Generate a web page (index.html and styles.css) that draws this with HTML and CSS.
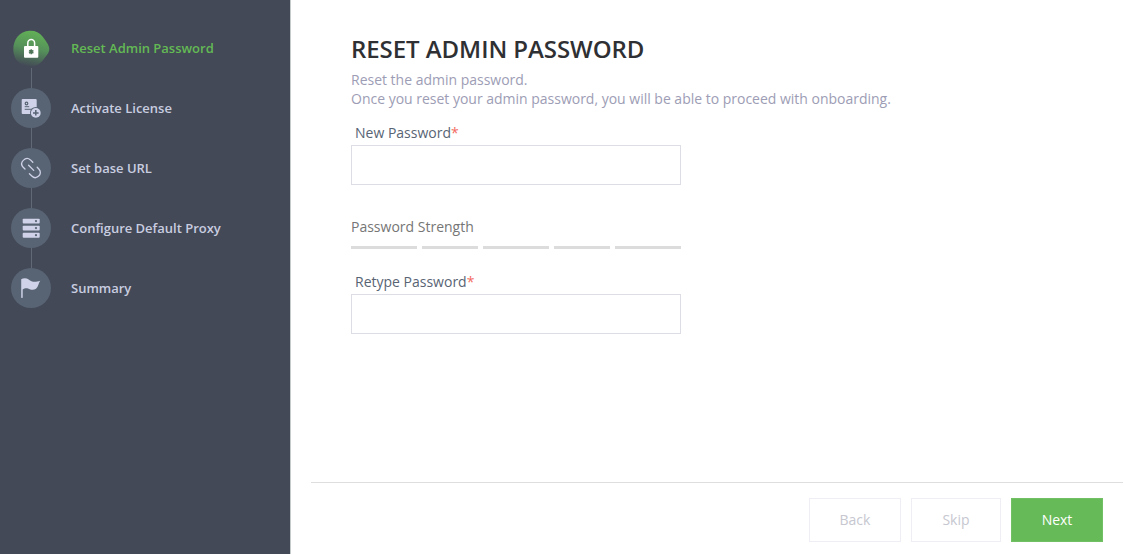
FILE: index.html
```html
<!DOCTYPE html>
<html lang="en">
<head>
<meta charset="utf-8">
<title>Reset Admin Password</title>
<link rel="stylesheet" href="styles.css">
</head>
<body>
<div class="wizard">
  <nav class="sidebar">
    <ol class="steps">
      <li class="step active">
        <svg class="icon" viewBox="0 0 40 40">
          <defs><linearGradient id="glow" x1=".6" y1="0" x2=".4" y2="1"><stop offset="0" stop-color="#62b156"/><stop offset=".5" stop-color="#55905a"/><stop offset="1" stop-color="#434956"/></linearGradient></defs>
          <path fill="url(#glow)" d="M18.500 2.800C24 2.500 28.500 4.500 31.500 8.500C34 12 38.300 16.500 38.300 21C38.300 25 35 28 32.500 31.500C29 36.500 24 38.500 19 38.300C9 38 2.300 31.500 2.300 21.500C2.300 11.500 8.500 3.300 18.500 2.800Z"/>
          <path fill="none" stroke="#fff" stroke-width="1.500" d="M16.800 19v-4a3.400 3.400 0 0 1 6.800 0v4"/>
          <rect x="13" y="18" width="14.300" height="11.800" rx="1" fill="#fff"/>
          <path stroke="#4e7458" stroke-width="1.500" d="M20.200 21.300v5M18 22.500l4.400 2.600M22.400 22.500l-4.400 2.600"/>
        </svg>
        <span>Reset Admin Password</span>
      </li>
      <li class="step">
        <svg class="icon" viewBox="0 0 40 40">
          <circle cx="20" cy="20" r="20" fill="#586474"/>
          <rect x="10.700" y="11" width="15" height="15" rx="1" fill="#cfd2e8"/>
          <circle cx="15.500" cy="15.500" r="1.300" fill="none" stroke="#586474" stroke-width="1.200"/>
          <path stroke="#586474" stroke-width="1" d="M13.700 18.700h4.500M13.700 21.300h7"/>
          <circle cx="24.800" cy="24.700" r="5.800" fill="#586474"/>
          <circle cx="24.800" cy="24.900" r="4.900" fill="#cfd2e8"/>
          <path stroke="#586474" stroke-width="1.500" d="M24.800 22v5.600M22 24.900h5.600"/>
        </svg>
        <span>Activate License</span>
      </li>
      <li class="step">
        <svg class="icon" viewBox="0 0 40 40">
          <circle cx="20" cy="20" r="20" fill="#586474"/>
          <g fill="none" stroke="#cfd2e8" stroke-width="1.300" stroke-linecap="round">
            <path d="M21.800 14.200L19.500 11.900C17.300 10 14.500 10.100 12.500 12.100C10.200 14.300 10.300 17.200 12.200 19.200L14 21"/>
            <path d="M26.200 19.300L28 21.200C29.900 23.200 29.800 26.200 27.700 28.100C25.500 30.100 22.700 29.900 20.800 28L18.400 25.700"/>
            <path d="M17.600 17.300l5.100 5.100"/>
          </g>
        </svg>
        <span>Set base URL</span>
      </li>
      <li class="step">
        <svg class="icon" viewBox="0 0 40 40">
          <circle cx="20" cy="20" r="20" fill="#586474"/>
          <g fill="#cfd2e8"><rect x="11.700" y="10.700" width="17" height="4.800" rx=".9"/><rect x="11.700" y="17.700" width="17" height="4.800" rx=".9"/><rect x="11.700" y="24.800" width="17" height="4.900" rx=".9"/></g>
          <g fill="#586474"><circle cx="25" cy="13.100" r="1.100"/><circle cx="25" cy="20.100" r="1.100"/><circle cx="25" cy="27.200" r="1.100"/></g>
        </svg>
        <span>Configure Default Proxy</span>
      </li>
      <li class="step">
        <svg class="icon" viewBox="0 0 40 40">
          <circle cx="20" cy="20" r="20" fill="#586474"/>
          <path fill="#cfd2e8" d="M10.200 11.200C12.500 9.800 15.500 9.800 17.700 11.500C20.700 13.900 23.500 14.600 29.200 12.800C27.300 15.300 27.500 18.700 25 20.800C22.300 22.700 19.500 21.700 17 20.500C15 19.900 13.200 20.500 11.700 21.600V29.500Q11 30.700 10.200 29.500Z"/>
        </svg>
        <span>Summary</span>
      </li>
    </ol>
  </nav>
  <main class="content">
    <form class="form">
      <h1 class="title">RESET ADMIN PASSWORD</h1>
      <p class="intro">Reset the admin password.<br>Once you reset your admin password, you will be able to proceed with onboarding.</p>
      <label class="label" for="new">New Password<span class="required">*</span></label>
      <input class="input" id="new" type="password">
      <div class="strength">Password Strength</div>
      <div class="meter"><i class="bar"></i><i class="bar short"></i><i class="bar"></i><i class="bar short"></i><i class="bar"></i></div>
      <label class="label" for="retype">Retype Password<span class="required">*</span></label>
      <input class="input" id="retype" type="password">
    </form>
    <footer class="footer">
      <button class="button back">Back</button>
      <button class="button skip">Skip</button>
      <button class="button next">Next</button>
    </footer>
  </main>
</div>
</body>
</html>
```
FILE: styles.css
```css
* { box-sizing: border-box; }
body { margin: 0; font-family: "Open Sans", sans-serif; font-size: 14px; color: #586474; }
.wizard { display: flex; height: 554px; overflow: hidden; background: #fff; }
.sidebar { width: 291px; flex: none; padding: 28px 0 0 11px; background: #434956; border-right: 1px solid #c6caca; }
.steps { list-style: none; margin: 0; padding: 0; display: flex; flex-direction: column; gap: 20px; }
.step { position: relative; display: flex; align-items: center; gap: 20px; height: 40px; font-size: 13px; font-weight: 600; letter-spacing: -0.01px; color: #c9cde0; }
.step + .step::before { content: ""; position: absolute; left: 20px; top: -20px; width: 1px; height: 20px; background: #626976; }
.step.active { color: #63ba55; }
.icon { width: 40px; height: 40px; flex: none; }
.content { flex: 1; display: flex; flex-direction: column; padding: 32px 1px 0 20px; }
.form { flex: 1; display: flex; flex-direction: column; align-items: flex-start; padding-left: 40px; }
.title { margin: 0; font-size: 24px; line-height: 33px; font-weight: 600; letter-spacing: -0.06px; color: #2f3033; }
.intro { margin: 5px 0 0; line-height: 19px; letter-spacing: -0.01px; color: #9d9db5; }
.label { margin: 15px 0 3px 4px; line-height: 19px; }
.required { color: #f36b62; }
.input { width: 330px; height: 40px; padding: 0 10px; border: 1px solid #dddde5; background: #fff; border-radius: 0; }
.strength { margin-top: 32px; line-height: 20px; color: #767676; }
.meter { display: flex; gap: 5px; margin: 9px 0 8px; }
.bar { width: 66px; height: 3px; background: #dcdcdc; }
.bar.short { width: 56px; }
.footer { height: 72px; display: flex; gap: 10px; justify-content: flex-end; padding: 15px 20px 0 0; border-top: 1px solid #dedede; }
.button { height: 44px; padding: 0 0 2px; font: 14px "Open Sans", sans-serif; border: 1px solid #eeeef4; background: #fff; color: #c6c7cf; }
.back { width: 92px; }
.skip { width: 90px; }
.next { width: 92px; color: #fff; background: #66ba57; border-color: #72c064; }
```
